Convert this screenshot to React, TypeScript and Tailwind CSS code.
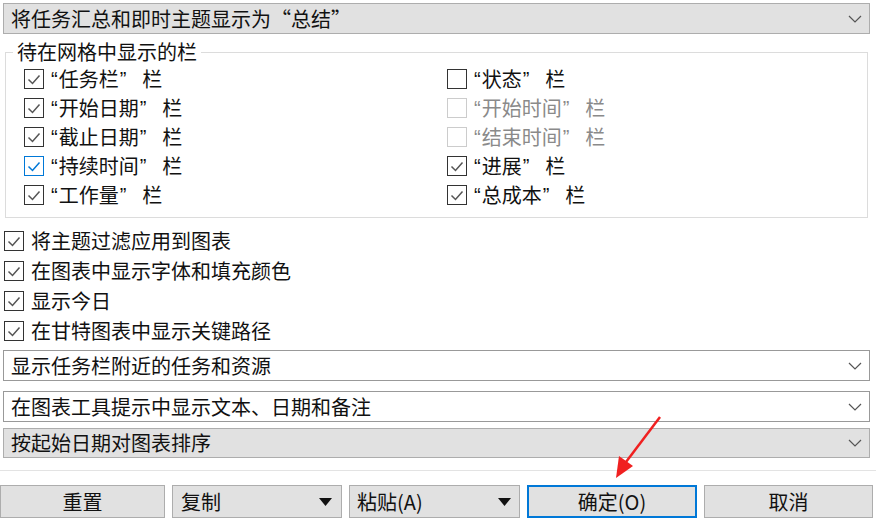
import React from "react";

type Box = "on" | "off" | "blue" | "disabled";

const FONT = { fontFamily: '"Noto Sans CJK SC", "Microsoft YaHei", sans-serif' };
const QUOTE = { fontFamily: '"Liberation Sans", Arial, sans-serif' };

function Check({ state }: { state: Box }) {
  const border =
    state === "blue" ? "border-[#0078d7]" : state === "disabled" ? "border-[#cccccc]" : "border-[#333333]";
  const stroke = state === "blue" ? "#0078d7" : "#555555";
  return (
    <span className={`w-[20px] h-[20px] border ${border} bg-white flex items-center justify-center shrink-0`}>
      {(state === "on" || state === "blue") && (
        <svg width="16" height="16" viewBox="0 0 16 16">
          <polyline points="2.5,8.5 6.5,12.5 13.5,4.5" fill="none" stroke={stroke} strokeWidth="1.5" />
        </svg>
      )}
    </span>
  );
}

function Chevron() {
  return (
    <svg width="14" height="8" viewBox="0 0 14 8" className="shrink-0">
      <polyline points="1,1 7,7 13,1" fill="none" stroke="#555" strokeWidth="1.2" />
    </svg>
  );
}

function Select({ label, gray, className }: { label: string; gray?: boolean; className: string }) {
  return (
    <div
      className={`flex items-center justify-between pl-[7px] pr-[7px] border ${
        gray ? "bg-[#e1e1e1] border-[#adadad]" : "bg-white border-[#999999]"
      } ${className}`}
    >
      <span className="text-[20px] leading-none text-[#111]">{label}</span>
      <Chevron />
    </div>
  );
}

function Triangle() {
  return (
    <svg width="13" height="8" viewBox="0 0 13 8" className="shrink-0">
      <polygon points="0,0 13,0 6.5,8" fill="#111" />
    </svg>
  );
}

const LEFT: [string, Box][] = [
  ["任务栏", "on"],
  ["开始日期", "on"],
  ["截止日期", "on"],
  ["持续时间", "blue"],
  ["工作量", "on"],
];

const RIGHT: [string, Box][] = [
  ["状态", "off"],
  ["开始时间", "disabled"],
  ["结束时间", "disabled"],
  ["进展", "on"],
  ["总成本", "on"],
];

const OPTIONS = ["将主题过滤应用到图表", "在图表中显示字体和填充颜色", "显示今日", "在甘特图表中显示关键路径"];

function Row({ name, state }: { name: string; state: Box }) {
  return (
    <div className="h-[29px] flex items-center gap-[7px]">
      <Check state={state} />
      <div
        className={`flex items-center text-[20px] leading-none ${
          state === "disabled" ? "text-[#8a8a8a]" : "text-[#111]"
        }`}
      >
        <span style={QUOTE} className="mr-[1px]">“</span>
        <span>{name}</span>
        <span style={QUOTE} className="ml-[1px]">”</span>
        <span className="ml-[16px]">栏</span>
      </div>
    </div>
  );
}

export default function App() {
  return (
    <div className="w-[876px] h-[522px] bg-white relative overflow-hidden" style={FONT}>
      <div className="pt-[3px] px-[3px]">
        <Select label="将任务汇总和即时主题显示为“总结”" gray className="h-[31px] w-[867px]" />
      </div>

      {/* Columns shown in the grid */}
      <fieldset className="ml-[5px] mt-[8px] w-[863px] border border-[#dcdcdc] pl-[18px] pt-[2px] pb-[8px] m-0">
        <legend className="ml-[-11px] px-[4px] text-[20px] leading-[20px] text-[#111]">待在网格中显示的栏</legend>
        <div className="grid grid-cols-[423px_1fr]">
          <div>
            {LEFT.map(([n, s]) => (
              <Row key={n} name={n} state={s} />
            ))}
          </div>
          <div>
            {RIGHT.map(([n, s]) => (
              <Row key={n} name={n} state={s} />
            ))}
          </div>
        </div>
      </fieldset>

      <div className="mt-[8px] pl-[4px]">
        {OPTIONS.map(o => (
          <div key={o} className="h-[30px] flex items-center gap-[7px]">
            <Check state="on" />
            <span className="text-[20px] leading-none text-[#111]">{o}</span>
          </div>
        ))}
      </div>

      <div className="px-[3px] mt-[4px]">
        <Select label="显示任务栏附近的任务和资源" className="h-[31px] w-[867px]" />
        <Select label="在图表工具提示中显示文本、日期和备注" className="h-[31px] w-[867px] mt-[10px]" />
        <Select label="按起始日期对图表排序" gray className="h-[30px] w-[867px] mt-[6px]" />
      </div>

      <div className="mt-[12px] border-t border-[#e3e3e3]" />

      <div className="mt-[14px] flex gap-[7px] text-[20px] leading-none text-[#111]">
        <button className="w-[165px] h-[33px] bg-[#e1e1e1] border border-[#adadad] flex items-center justify-center">
          重置
        </button>
        <button className="w-[170px] h-[33px] bg-[#e1e1e1] border border-[#adadad] flex items-center justify-between pl-[8px] pr-[9px]">
          <span>复制</span>
          <Triangle />
        </button>
        <button className="w-[171px] h-[33px] bg-[#e1e1e1] border border-[#adadad] flex items-center justify-between pl-[7px] pr-[8px]">
          <span>粘贴(A)</span>
          <Triangle />
        </button>
        <button className="w-[170px] h-[33px] bg-[#e1e1e1] border-2 border-[#0078d7] flex items-center justify-center">
          确定(O)
        </button>
        <button className="w-[169px] h-[33px] bg-[#e1e1e1] border border-[#adadad] flex items-center justify-center">
          取消
        </button>
      </div>

      {/* red annotation arrow */}
      <svg className="absolute left-0 top-0 pointer-events-none" width="876" height="522">
        <line x1="660" y1="417" x2="626" y2="462" stroke="#f02020" strokeWidth="2.5" />
        <polygon points="616,478 619,456 633,466" fill="#f02020" />
      </svg>
    </div>
  );
}
